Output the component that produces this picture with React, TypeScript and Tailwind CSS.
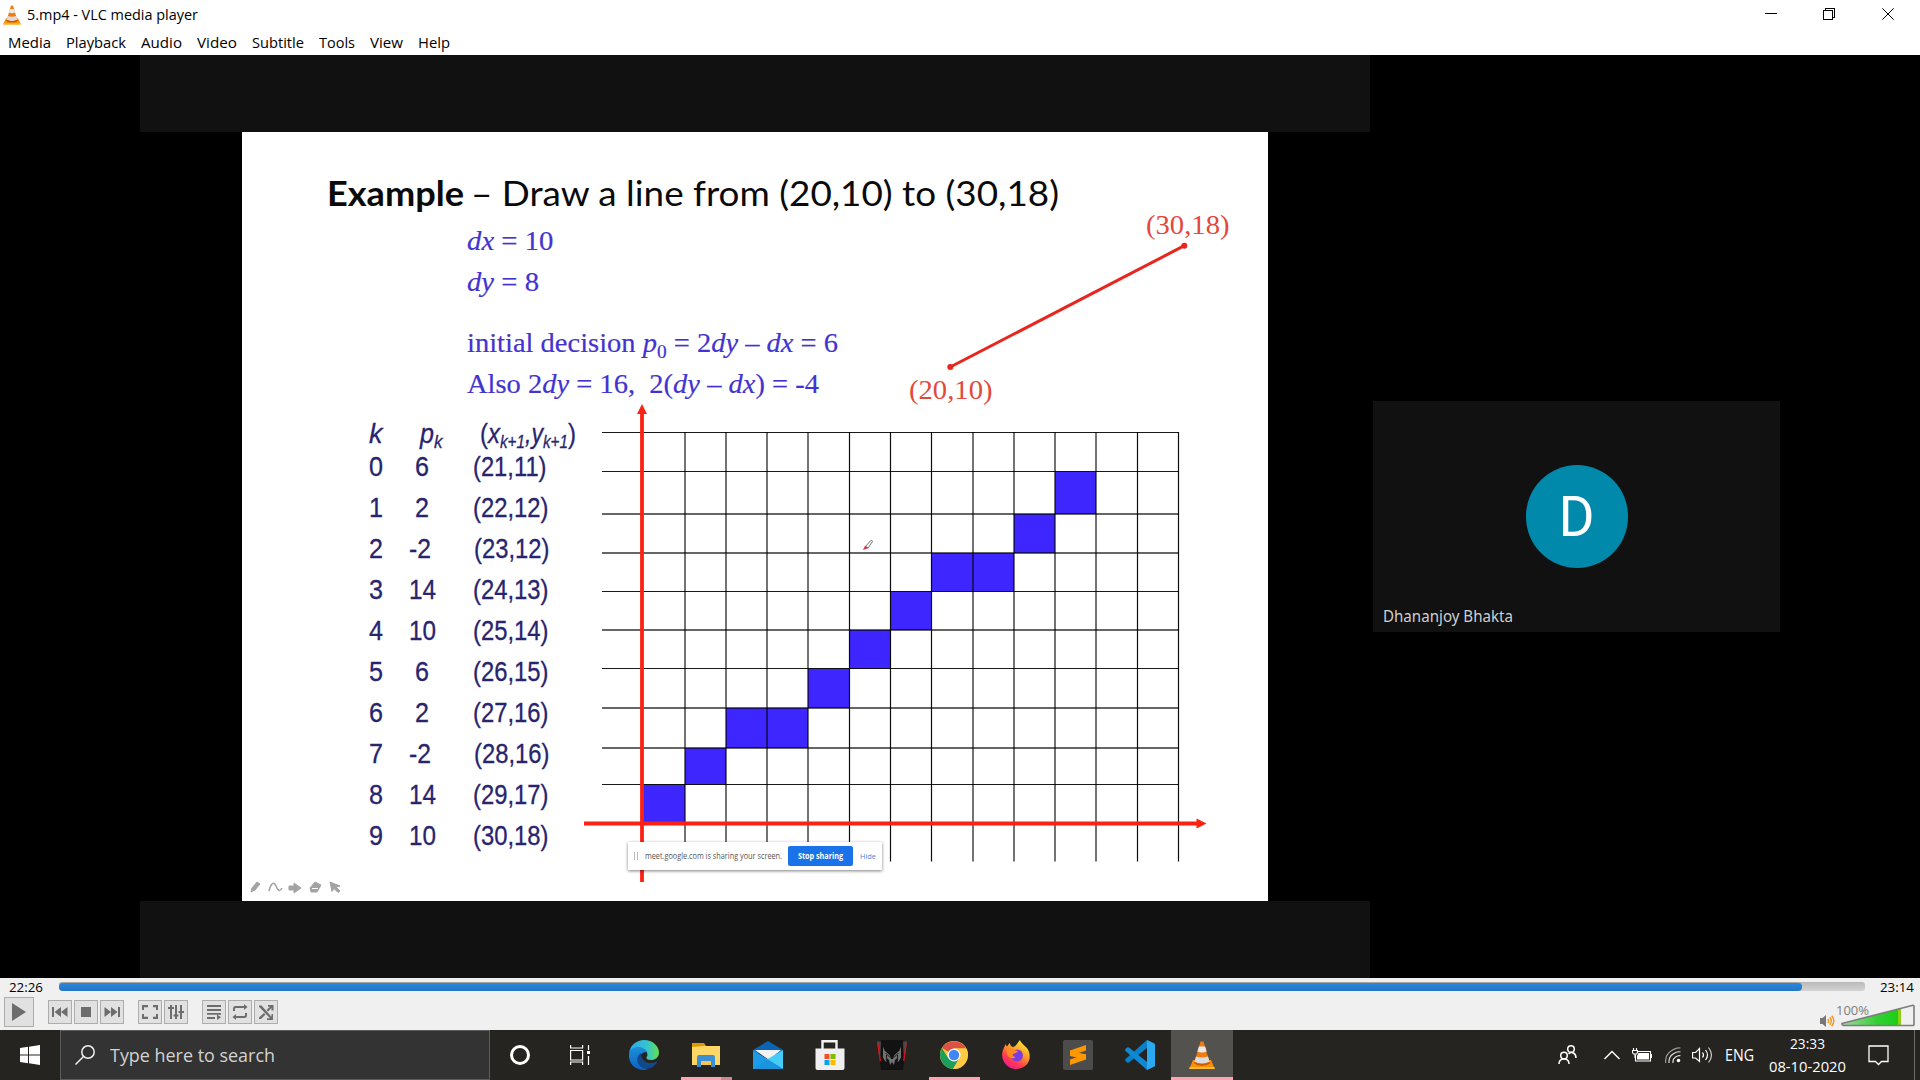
import React, { useLayoutEffect, useRef, useState } from "react";

const UI = "font-['Open_Sans','Noto_Sans',sans-serif]";

/* Single line of text stretched horizontally to an exact width. */
function Fit({ w, className = "", children }: { w: number; className?: string; children: React.ReactNode }) {
  const ref = useRef<HTMLSpanElement>(null);
  const [scale, setScale] = useState(1);
  useLayoutEffect(() => {
    if (ref.current && ref.current.offsetWidth) {
      const s = window.getComputedStyle(ref.current);
      setScale(w / parseFloat(s.width));
    }
  }, [w]);
  return (
    <span className={"block shrink-0 text-left " + className} style={{ width: w }}>
      <span ref={ref} className="inline-block origin-left whitespace-pre" style={{ transform: `scaleX(${scale})` }}>
        {children}
      </span>
    </span>
  );
}

function Cone({ className }: { className: string }) {
  return (
    <svg className={className} viewBox="0 0 26 28">
      <path d="M4 19h18l3.6 8.4H.4z" fill="#f88f04" />
      <path d="M.6 26h24.8l.4 2H.2z" fill="#ffb92b" />
      <path d="M11.4.8q1.6-1 3.2 0l6 20.5q-7.600 4-15.200 0z" fill="#f07b10" />
      <path d="M9.900 5.500h6.200l1.500 5q-4.600 1.800-9.200 0z" fill="#e9e9ec" />
      <path d="M7 15.500q6 2 12 0l1.600 5.200q-7.600 3.600-15.200 0z" fill="#dcdcdf" />
      <path d="M5.400 21q7.600 4 15.200 0l.5 1.500q-8 4.500-16.200 0z" fill="#c95a06" />
    </svg>
  );
}

const menus: [string, number][] = [
  ["Media", 43], ["Playback", 60], ["Audio", 41], ["Video", 40], ["Subtitle", 52], ["Tools", 36], ["View", 33], ["Help", 32],
];

function TitleBar() {
  return (
    <div className={"h-[55px] shrink-0 bg-white text-black " + UI}>
      <div className="flex h-[29px] items-center">
        <Cone className="ml-[3px] h-[20px] w-[18px]" />
        <Fit w={171} className="ml-[6px] text-[14px] leading-[28px]">5.mp4 - VLC media player</Fit>
        <svg className="ml-auto mr-[26px] mt-[-1px] h-[12px] w-[129px]" viewBox="0 0 129 12" fill="none" stroke="#000" shapeRendering="crispEdges">
          <path d="M0 5.500h12" />
          <path d="M58.500 2.500h9v9h-9z M60.500 2.500v-2h9v9h-2" />
          <path d="M117.300.300l11.400 11.400M128.700.300l-11.400 11.400" shapeRendering="auto" />
        </svg>
      </div>
      <div className="flex gap-[15px] pl-[7.500px] text-[14px] leading-[28px]">
        {menus.map(([m, w]) => <Fit key={m} w={w}>{m}</Fit>)}
      </div>
    </div>
  );
}

const XS = [685, 726, 767, 808, 849.5, 890.5, 931.5, 973, 1014, 1055, 1096, 1137.5, 1178.5];
const YS = [432.5, 471.5, 514, 553, 591.5, 630, 668.5, 708, 748, 784.5];
const CELLS = [
  [642, 784.5, 685, 823], [685, 748, 726, 784.5], [726, 708, 767, 748], [767, 708, 808, 748], [808, 668.5, 849.5, 708],
  [849.5, 630, 890.5, 668.5], [890.5, 591.5, 931.5, 630], [931.5, 553, 973, 591.5], [973, 553, 1014, 591.5],
  [1014, 514, 1055, 553], [1055, 471.5, 1096, 514],
];

function Graph() {
  return (
    <svg className="absolute inset-0 h-full w-full" viewBox="242 132 1026 769">
      {CELLS.map(([a, b, c, d]) => <rect key={a} x={a} y={b} width={c - a} height={d - b} fill="#3d26ff" />)}
      {XS.map((x) => <path key={x} d={`M${x} 432V861.500`} stroke="#000" strokeWidth={x % 1 ? 1.2 : 2} strokeOpacity={x % 1 ? 0.95 : 0.55} />)}
      {YS.map((y) => <path key={y} d={`M602 ${y}H1179`} stroke="#000" strokeWidth={y % 1 ? 1.200 : 2} strokeOpacity={y % 1 ? 0.9 : 0.6} />)}
      <g stroke="#fb2214" fill="#fb2214">
        <path d="M642 412V882M584 823.500H1198" strokeWidth="3.800" />
        <path d="M642 404l5 10h-10zM1206.500 823.500l-10-5v10z" stroke="none" />
      </g>
      <g stroke="#e8261e" fill="#e8261e">
        <path d="M950.300 367L1184.300 245.700" strokeWidth="3" />
        <circle cx="950.300" cy="367" r="3" stroke="none" />
        <circle cx="1184.300" cy="245.700" r="3" stroke="none" />
      </g>
      <g fill="none" strokeWidth="1">
        <path d="M865.500 546.500l5.500-6.200 1.700 1-4.700 6.700z" stroke="#777" />
        <path d="M863.500 549.500l1.800-3.500 2.500 2z" fill="#d4304a" stroke="#d4304a" strokeWidth=".6" />
      </g>
      <g fill="#a3a3a3" stroke="#a3a3a3" strokeWidth="1">
        <path d="M251 892l1-4 5-6 3 2-5 6z" />
        <path d="M269 891c2-8 5-10 7-5s4 6 6 2" fill="none" strokeWidth="1.600" />
        <path d="M289 886h5v-3l7 5-7 5v-3h-5z" />
        <path d="M310 888l5-6 6 3-4 7h-6z" />
        <path d="M312 888.500h6" stroke="#fff" />
        <path d="M330 882l10 4-4 1 4 4-2 1.500-4-4-2 3z" />
      </g>
    </svg>
  );
}

const rows = [
  ["0", "6", "(21,11)"], ["1", "2", "(22,12)"], ["2", "-2", "(23,12)"], ["3", "14", "(24,13)"], ["4", "10", "(25,14)"],
  ["5", "6", "(26,15)"], ["6", "2", "(27,16)"], ["7", "-2", "(28,16)"], ["8", "14", "(29,17)"], ["9", "10", "(30,18)"],
];

function Table() {
  return (
    <div className="absolute left-[127px] top-[281px] w-[220px] font-['Liberation_Sans',Arial,sans-serif] text-[27.500px] leading-[41px] text-[#28246e] [-webkit-text-stroke:0.300px_#28246e]">
      <div className="flex h-[33px] italic">
        <Fit w={13.500}>k</Fit>
        <div className="ml-[37px] flex">
          <Fit w={14}>p</Fit>
          <Fit w={8.500} className="relative top-[8px] text-[18.500px]">k</Fit>
        </div>
        <div className="ml-[38px] flex">
          <Fit w={20}><span className="not-italic">(</span>x</Fit>
          <Fit w={25} className="relative top-[8px] text-[18.500px]">k+1</Fit>
          <Fit w={18}>,y</Fit>
          <Fit w={25} className="relative top-[8px] text-[18.500px]">k+1</Fit>
          <Fit w={8} className="not-italic">)</Fit>
        </div>
      </div>
      {rows.map(([k, p, xy]) => (
        <div key={k} className="flex h-[41px]">
          <Fit w={14}>{k}</Fit>
          <div className={"w-[90px] " + (p.length === 1 ? "pl-[31.500px]" : "pl-[25.500px]")}>
            <Fit w={p.length === 1 ? 14 : p[0] === "-" ? 22 : 27}>{p}</Fit>
          </div>
          <Fit w={k === "0" ? 73.5 : 75.5} className={p === "-2" ? "pl-[1px]" : ""}>{xy}</Fit>
        </div>
      ))}
    </div>
  );
}

function Slide() {
  return (
    <div className="relative ml-[102px] h-[769px] w-[1026px] overflow-hidden bg-white">
      <Graph />
      <div className="absolute left-[85px] top-[38px] flex gap-[7px] font-[Lato,sans-serif] text-[35px] leading-[44px] text-[#0a0a0a]">
        <Fit w={137} className="font-bold">Example</Fit>
        <Fit w={588}>– Draw a line from (20,10) to (30,18)</Fit>
      </div>
      <div className="absolute left-[224.500px] top-[87.500px] flex flex-col font-['Liberation_Serif',serif] text-[28px] leading-[41px] text-[#4334cf] [-webkit-text-stroke:0.200px_#4334cf]">
        <Fit w={86.500}><i>dx</i> = 10</Fit>
        <Fit w={72}><i>dy</i> = 8</Fit>
        <Fit w={371} className="mt-[20.500px] h-[41px]">
          initial decision <i>p</i><span className="relative top-[6px] text-[19px]">0</span> = 2<i>dy</i> – <i>dx</i> = 6
        </Fit>
        <Fit w={352} className="h-[41px]">Also 2<i>dy</i> = 16,  2(<i>dy</i> – <i>dx</i>) = -4</Fit>
      </div>
      <div className="absolute left-[903.500px] top-[72.500px] font-['Liberation_Serif',serif] text-[27px] leading-[41px] text-[#e2483c]">
        <Fit w={83.500}>(30,18)</Fit>
      </div>
      <div className="absolute left-[666.500px] top-[237.500px] font-['Liberation_Serif',serif] text-[27px] leading-[41px] text-[#e2483c]">
        <Fit w={83.500}>(20,10)</Fit>
      </div>
      <Table />
      <div className="absolute left-[386px] top-[710px] flex h-[28px] w-[254px] items-center bg-white font-['Open_Sans',sans-serif] text-[8px] leading-[20px] text-[#555] shadow-[0_1px_3px_rgba(0,0,0,0.5)]">
        <div className="ml-[6px] h-[8px] w-[4px] border-x border-[#bbb]" />
        <Fit w={137} className="ml-[7px] text-[8.500px]">meet.google.com is sharing your screen.</Fit>
        <div className="ml-[6px] flex h-[20px] w-[65px] justify-center rounded-[2px] bg-[#1a73e8] font-bold text-white">
          <Fit w={45}>Stop sharing</Fit>
        </div>
        <Fit w={16} className="ml-[7px] text-[#4d7fd6]">Hide</Fit>
      </div>
    </div>
  );
}

function Video() {
  return (
    <div className="flex h-[923px] shrink-0 bg-black pl-[140px]">
      <div className="w-[1230px]">
        <div className="h-[77px] bg-[#111]" />
        <Slide />
        <div className="h-[77px] bg-[#111]" />
      </div>
      <div className="ml-[3px] mt-[346px] flex h-[231px] w-[407px] flex-col items-center bg-[#111]">
        <div className="mt-[64px] h-[103px] w-[102px] rounded-full bg-[#0089ab] text-center font-[Roboto,sans-serif] text-[55px] leading-[105px] text-white">D</div>
        <Fit w={130} className="ml-[10px] mt-[36px] self-start font-['Noto_Sans',sans-serif] text-[17px] leading-[24px] text-[#cfcfcf]">Dhananjoy Bhakta</Fit>
      </div>
    </div>
  );
}

function Btn({ children }: { children: React.ReactNode }) {
  return (
    <div className="flex h-[24px] w-[24px] items-center justify-center border border-[#adadad] bg-[#e1e1e1]">
      <svg className="h-[16px] w-[16px]" viewBox="0 0 16 16" fill="#6d6d6d" stroke="none">{children}</svg>
    </div>
  );
}

function Controls() {
  return (
    <div className={"flex h-[52px] shrink-0 flex-col bg-[#f0f0f0] " + UI}>
      <div className="flex h-[18px] items-center text-[13px] leading-[18px] text-black">
        <Fit w={34} className="ml-[8.500px]">22:26</Fit>
        <div className="ml-[16px] mt-[-1px] h-[9px] w-[1806px] rounded-[3px] bg-gradient-to-b from-[#b9b9b9] to-[#d4d4d4]">
          <div className="h-full w-[1743px] rounded-[4px] border-t border-[#aaa69f] bg-gradient-to-b from-[#2c88da] to-[#2376c8]" />
        </div>
        <Fit w={34} className="ml-[15.500px]">23:14</Fit>
      </div>
      <div className="flex h-[34px] items-center pl-[4px]">
        <div className="mt-[-2px] flex h-[30px] w-[30px] items-center justify-center border border-[#adadad] bg-[#e1e1e1]">
          <svg className="h-[18px] w-[16px]" viewBox="0 0 16 18" fill="#6d6d6d"><path d="M1 0l14 9-14 9z" /></svg>
        </div>
        <div className="mt-[-2px] ml-[14px] flex gap-[2px]">
          <Btn><path d="M0 3h2v10H0zM9 3v10L2.500 8zM15.500 3v10L9 8z" /></Btn>
          <Btn><path d="M3 3h10v10H3z" /></Btn>
          <Btn><path d="M14 3h2v10h-2zM7 3v10l6.500-5zM.500 3v10L7 8z" /></Btn>
        </div>
        <div className="mt-[-2px] ml-[14px] flex gap-[2px]">
          <Btn><path d="M0 1h6v2.200H2V6H0zM16 1h-5v2.200h3V6h2zM0 15h6v-2.200H2V10H0zM16 15h-5v-2.200h3V10h2z" /></Btn>
          <Btn><path d="M2 1h2v14H2zM7 1h2v14H7zM12 1h2v14h-2zM0 3h6v2H0zM5.500 10.500h5v2h-5zM10.500 7h5.500v2h-5.500z" /></Btn>
        </div>
        <div className="mt-[-2px] ml-[14px] flex gap-[2px]">
          <Btn><path d="M1 1h14v2H1zM1 5h14v2H1zM1 9h14v1.800H1zM1 13h8v2H1zM11 10.500l4 2.700-4 2.800z" /></Btn>
          <Btn><path d="M1 7V4.500Q1 2 3.500 2H12V0l3.500 3L12 6V4H3.500Q3 4 3 4.500V7zM15 9v2.500q0 2.500-2.500 2.500H4v2L.500 13 4 10v2h8.500q.5 0 .5-.5V9z" /></Btn>
          <Btn><path d="M1 1.500h2.500l10 11.300V10H15v6H9v-1.800h3L1 2.800zM10 1h5.500v5.500h-2V4L10 7.500 8.500 6 12 2.800h-2zM6 9l1.500 1.500L3 15H1v-1.500z" /></Btn>
        </div>
        <svg className="ml-auto mr-[85px] mt-[16px] h-[14px] w-[15px]" viewBox="0 0 15 14" fill="none">
          <path d="M0 4h2.500L6 1v12L2.500 10H0z" fill="#777" />
          <path d="M7.800 5q1.500 2 0 4M9.800 3.300q3 3.700 0 7.400M11.800 1.800q4 5.200 0 10.400" stroke="#f7941d" strokeWidth="1.400" />
        </svg>
        <div className="relative ml-[-79px] mr-[5px] h-[34px] w-[74px]">
          <svg className="absolute left-0 top-[8px] h-[23px] w-[74px]" viewBox="0 0 74 23">
            <defs>
              <linearGradient id="vol"><stop offset="0" stopColor="#a5d8a5" /><stop offset=".6" stopColor="#35cf35" /><stop offset="1" stopColor="#14d014" /></linearGradient>
            </defs>
            <path d="M1 20L59 4.500V21H3z" fill="url(#vol)" />
            <path d="M57 5l3-1v17h-3z" fill="#8ccf14" />
            <path d="M1 19.500L72 1.200q1 0 1 1V20.500q0 1-1 1H2.500q-2-.8-1.500-2z" fill="none" stroke="#7c7c7c" strokeWidth="1.600" />
          </svg>
          <div className="absolute left-[-5px] top-[5px] text-[12.500px] leading-[20px] text-[#7d7d7d]"><Fit w={33}>100%</Fit></div>
        </div>
      </div>
    </div>
  );
}

function Slot({ children, className = "" }: { children?: React.ReactNode; className?: string }) {
  return <div className={"relative flex h-[50px] w-[62px] shrink-0 items-center justify-center " + className}>{children}</div>;
}

function Taskbar() {
  return (
    <div className={"flex h-[50px] shrink-0 bg-[#252420] text-white " + UI}>
      <div className="flex w-[60px] items-center justify-center">
        <svg className="h-[20px] w-[20px]" viewBox="0 0 20 20" fill="#fff"><path d="M0 3l8-1.200v7.700H0zM9 1.700L20 0v9.500H9zM0 10.500h8v7.700L0 17zM9 10.500h11V20L9 18.300z" /></svg>
      </div>
      <div className="flex w-[430px] items-center border border-[#5c5c5c] bg-[#333]">
        <svg className="ml-[14px] h-[20px] w-[20px]" viewBox="0 0 20 20" fill="none" stroke="#f0f0f0" strokeWidth="1.500"><circle cx="13" cy="7" r="6.200" /><path d="M8.500 11.500L.5 19.500" /></svg>
        <Fit w={165} className="ml-[14.500px] text-[18px] leading-[48px] text-[#d2d2d2]">Type here to search</Fit>
      </div>
      <Slot className="w-[60px]!"><div className="h-[20px] w-[20px] rounded-full border-[3px] border-white" /></Slot>
      <Slot className="w-[60px]!">
        <svg className="h-[20px] w-[20px]" viewBox="0 0 20 20" fill="none" stroke="#fff" strokeWidth="1.200">
          <path d="M.600 5.500h12v9.500h-12zM.600 0v3h12V0M.600 20v-3h12v3M18.500 0v5M18.500 11v9" /><path d="M17 6h3v3h-3z" fill="#fff" stroke="none" />
        </svg>
      </Slot>
      <Slot className="ml-[3px]">
        <svg className="h-[30px] w-[30px]" viewBox="0 0 30 30">
          <defs>
            <linearGradient id="e1" x1="0" x2="1"><stop offset="0" stopColor="#2ba9e8" /><stop offset=".6" stopColor="#35c4cf" /><stop offset="1" stopColor="#66e04e" /></linearGradient>
            <linearGradient id="e2" x1="0" y1="0" x2="0" y2="1"><stop offset="0" stopColor="#1b8fdc" /><stop offset="1" stopColor="#0f62c0" /></linearGradient>
          </defs>
          <path d="M.200 13C1 5 8 0 15 0c9 0 15 6.500 15 12.500 0 5-4 7.500-8 7.500-3.500 0-5-1.500-4.500-2.500 1-1.500 1.200-3 .5-5C16 7.500 5 6 .200 13z" fill="url(#e1)" />
          <path d="M0 14C1 9 5 7 9 7c5 0 8 2.500 9 5.500-2-1-7 .5-7 6 0 6 4.500 10.500 8 10.700C10 32-1 26 0 14z" fill="url(#e2)" />
          <path d="M12 13c-5 3-5 10 0 14 5 4 12 1.500 16-4.500.3-.7-.3-1-.8-.7-8 3.700-15.700-1.300-15.200-8.800z" fill="#114a8b" />
        </svg>
      </Slot>
      <Slot>
        <svg className="h-[24px] w-[28px]" viewBox="0 0 28 24"><path d="M0 0h12l2 3H0z" fill="#e2a000" /><path d="M0 3h28v19H0z" fill="#ffd767" /><path d="M0 4l12-1v-3H0z" fill="#dd9b00" /><path d="M5 24V14q0-2 2-2h14q2 0 2 2v10h-4v-6H9v6z" fill="#3b8fd4" /><path d="M9 18h10v4H9z" fill="#f6c54b" /></svg>
        <div className="absolute bottom-0 left-[6px] flex h-[3px]"><div className="w-[40px] bg-[#ffa3b0]" /><div className="w-[11px] bg-[#c98893]" /></div>
      </Slot>
      <Slot>
        <svg className="h-[28px] w-[30px]" viewBox="0 0 30 28"><path d="M0 9L15 0l15 9v3H0z" fill="#0a64b4" /><path d="M2 9h26L16 19z" fill="#f2f2f2" /><path d="M0 9l15 9.500L30 28H0z" fill="#1c9be6" /><path d="M30 9L14 18.500 30 28z" fill="#45cdf7" /><path d="M0 28l15-9.500L30 28z" fill="#1b94e0" /></svg>
      </Slot>
      <Slot>
        <svg className="h-[30px] w-[30px]" viewBox="0 0 30 30"><path d="M7.500 9V1.200h14V9" fill="none" stroke="#f3f3f3" strokeWidth="2.400" /><path d="M.500 8.500h29V28q0 2-2 2h-25q-2 0-2-2z" fill="#efefef" /><path d="M9.500 14h5v5h-5z" fill="#f25022" /><path d="M15.500 14h5v5h-5z" fill="#7fba00" /><path d="M9.500 20h5v5h-5z" fill="#00a4ef" /><path d="M15.500 20h5v5h-5z" fill="#ffb900" /></svg>
      </Slot>
      <Slot>
        <svg className="h-[30px] w-[30px]" viewBox="0 0 30 30">
          <path d="M4 0h22l1 22-1 8H4l-1-8z" fill="#121212" />
          <path d="M0 1l4 1-1 16-1.500-5zM30 1l-4 1 1 16 1.500-5z" fill="#4a4a4a" />
          <path d="M.8 3l2.500 18M29.200 3l-2.500 18" stroke="#d3121b" strokeWidth="1.400" />
          <path d="M6 6.500l1.500 4 5 4.500 1.500 4h2l1.500-4 5-4.500 1.500-4v11l-2 3.500-1.500 1v-4l-2.500 2-1 5-2-3-2 3-1-5-2.500-2v4l-1.500-1-2-3.500z" fill="#727272" />
          <path d="M8.500 13l4.500 4.500M21.500 13L17 17.500M9.500 21v-6M20.500 21v-6" stroke="#1c1c1c" />
        </svg>
      </Slot>
      <Slot>
        <svg className="h-[28px] w-[28px]" viewBox="0 0 28 28"><circle cx="14" cy="14" r="14" fill="#fcc934" /><path d="M14 14L1.900 7A14 14 0 0 1 26.100 7.500H14z" fill="#dd5144" /><path d="M1.900 7A14 14 0 0 0 13 28l6-10.500-10.500 0z" fill="#1a9f5c" /><path d="M26.100 7.500H14L19.500 17.500 13 28A14 14 0 0 0 26.100 7.500z" fill="#fccb43" /><circle cx="14" cy="14" r="6.500" fill="#fff" /><circle cx="14" cy="14" r="5.200" fill="#4285f4" /></svg>
        <div className="absolute bottom-0 left-[6px] h-[3px] w-[51px] bg-[#ffa3b0]" />
      </Slot>
      <Slot>
        <svg className="h-[30px] w-[28px]" viewBox="0 0 28 30">
          <defs><linearGradient id="ff" x1=".8" y1="0" x2=".2" y2="1"><stop offset="0" stopColor="#fff13d" /><stop offset=".4" stopColor="#ff9a2b" /><stop offset=".7" stopColor="#ff3d4f" /><stop offset="1" stopColor="#f0149a" /></linearGradient></defs>
          <path d="M18 0c1 4 8 7 9 12 3 10-4 17-13 17S-2 20 .700 11C1.500 8 2.500 7 3.500 4c.5 1.500 1 2 1.500 2.500C6 5 7 3.500 8 3c0 2 1 3.500 3 4 3-.5 3.500-3 7-7z" fill="url(#ff)" />
          <circle cx="15" cy="15.500" r="6" fill="#7a3be0" /><path d="M4 9c4-2 7-1 8 1l4 1c-1 2-3 2-5 3-1 2 1 3 3 3-4 3-9 0-9-4z" fill="#ff8a1f" />
        </svg>
      </Slot>
      <Slot>
        <div className="flex h-[30px] w-[30px] items-center justify-center rounded-[2px] bg-[#4c4c4c]">
          <svg className="h-[20px] w-[16px]" viewBox="0 0 16 20" fill="#ff9800"><path d="M0 5.500L16 0v5.500L7 8.500 0 11zM16 9v5.500L0 20v-5.500L9 11.500z" /><path d="M0 5.500l16 4v5L0 11z" /></svg>
        </div>
      </Slot>
      <Slot>
        <svg className="h-[30px] w-[30px]" viewBox="0 0 30 30"><path d="M22 0v8L4 22.500q-1 .7-2 0l-1.500-1.500q-.8-1 0-2z" fill="#0a7fc9" /><path d="M22 30v-8L4 7.500q-1-.7-2 0L.500 9q-.8 1 0 2z" fill="#1089d4" /><path d="M22 0l7 3.300q1 .5 1 1.500v20.400q0 1-1 1.500L22 30z" fill="#2aa9f2" /></svg>
      </Slot>
      <Slot className="bg-[#53524f]">
        <Cone className="h-[28px] w-[26px]" />
        <div className="absolute bottom-0 left-0 h-[3px] w-[62px] bg-[#ffa3b0]" />
      </Slot>
      <div className="ml-auto flex items-center">
        <svg className="h-[20px] w-[19px]" viewBox="0 0 19 20" fill="none" stroke="#fff" strokeWidth="1.500"><circle cx="13" cy="4" r="3.300" /><circle cx="6" cy="10.500" r="3.300" /><path d="M1 19q0-5 5-5t5 5M10.500 9q2.500-2.500 5-1 2.500 1.500 2.500 5" /></svg>
        <svg className="ml-[27px] h-[10px] w-[16px]" viewBox="0 0 16 10" fill="none" stroke="#fff" strokeWidth="1.400"><path d="M.500 9L8 1.500 15.500 9" /></svg>
        <svg className="ml-[12px] h-[14px] w-[20px]" viewBox="0 0 20 14" fill="none" stroke="#fff" strokeWidth="1.100"><path d="M6 3.500h12.500v9.500H3.500V7" /><path d="M6.500 5h10.500v6.500h-12V8z" fill="#fff" stroke="none" /><path d="M1.500 0v2M4.500 0v2M.5 2.500h5v2l-1 1.500h-3l-1-1.500zM3 6v4" /><path d="M19.500 6v4" /></svg>
        <svg className="ml-[13px] h-[16px] w-[16px]" viewBox="0 0 16 16" fill="none" stroke="#ddd" strokeWidth="1.200"><path d="M.600 16Q0 8 6 4T15.500 1" stroke="#999" /><path d="M4 16q-.5-6 4-9t7.500-2" /><path d="M8 16q-.5-4 2.500-6t5-1.200" /><circle cx="13.500" cy="13.500" r="1.800" fill="#fff" stroke="none" /></svg>
        <svg className="ml-[11px] h-[18px] w-[21px]" viewBox="0 0 21 18" fill="none" stroke="#fff" strokeWidth="1.200"><path d="M.600 6.500h3L7.500 2.500v13L3.600 12h-3z" /><path d="M10.500 6.500q2 2.500 0 5M13.500 4q4 5 0 10" /><path d="M16.500 1.500q6 7.500 0 15" stroke="#ccc" /></svg>
        <Fit w={29} className="ml-[12px] text-[15.500px] leading-[50px]">ENG</Fit>
        <div className="ml-[15px] flex w-[77px] flex-col items-center text-[15px] leading-[23px]">
          <Fit w={35}>23:33</Fit>
          <Fit w={77}>08-10-2020</Fit>
        </div>
        <svg className="ml-[22px] h-[21px] w-[21px]" viewBox="0 0 21 21" fill="none" stroke="#fff" strokeWidth="1.300"><path d="M1 1h19v15.500h-6.500l-3 3-3-3H1z" /></svg>
        <div className="ml-[25px] mr-[5px] h-[50px] w-px bg-[#6e6d6a]" />
      </div>
    </div>
  );
}

export default function App() {
  return (
    <div className="flex h-[1080px] w-[1920px] flex-col overflow-hidden bg-black">
      <TitleBar />
      <Video />
      <Controls />
      <Taskbar />
    </div>
  );
}
